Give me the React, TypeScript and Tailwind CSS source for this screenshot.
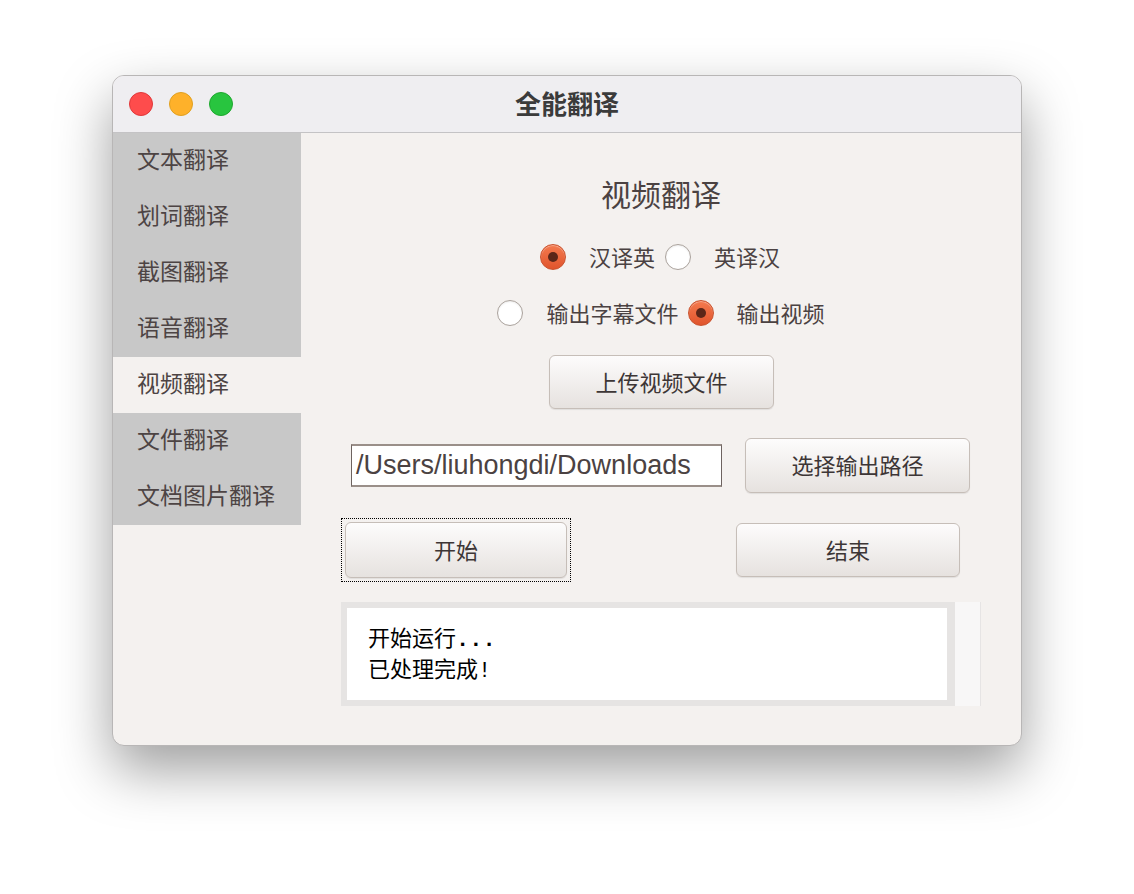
import React from 'react'

const CJK = { fontFamily: '"Noto Sans CJK SC", "Noto Sans", sans-serif' }
const MONO = { fontFamily: '"Liberation Mono", "Noto Sans CJK SC", monospace' }

const MENU = ['文本翻译', '划词翻译', '截图翻译', '语音翻译', '视频翻译', '文件翻译', '文档图片翻译']

function Radio({ checked }: { checked: boolean }) {
  if (checked) {
    return (
      <span className="flex h-[26px] w-[26px] shrink-0 items-center justify-center rounded-full border border-[#c9512c] bg-gradient-to-b from-[#f47a4e] to-[#e0542c] shadow-[inset_0_1px_1px_rgba(255,255,255,0.4)]">
        <span className="h-[10px] w-[10px] rounded-full bg-[#5b2618]" />
      </span>
    )
  }
  return (
    <span className="h-[26px] w-[26px] shrink-0 rounded-full border border-[#aaa29c] bg-white shadow-[inset_0_1px_2px_rgba(0,0,0,0.08)]" />
  )
}

function Option({ label, checked }: { label: string; checked: boolean }) {
  return (
    <div className="flex items-center">
      <Radio checked={checked} />
      <span className="ml-[23px] pb-[2px] text-[22px] leading-none text-[#4b4242]">{label}</span>
    </div>
  )
}

function Btn({ label, className = '' }: { label: string; className?: string }) {
  return (
    <button
      className={`flex items-center justify-center rounded-[6px] border border-[#c6beb8] bg-gradient-to-b from-[#fdfcfc] to-[#e6e2df] pb-[2px] text-[22px] text-[#3d3636] shadow-[0_1px_1px_rgba(0,0,0,0.08)] ${className}`}
    >
      {label}
    </button>
  )
}

export default function App() {
  return (
    <div className="min-h-[894px] w-[1134px] bg-white pl-[112px] pt-[75px]" style={CJK}>
      <div className="flex h-[671px] w-[910px] flex-col overflow-hidden rounded-[12px] border border-[#b8b6b6] bg-[#f4f1ef] shadow-[0_24px_55px_rgba(0,0,0,0.38)]">
        {/* title bar */}
        <div className="relative flex h-[57px] shrink-0 items-center justify-center border-b border-[#c4c3c5] bg-[#efeef1]">
          <div className="absolute left-[16px] top-[16px] flex gap-[16px]">
            <span className="h-[24px] w-[24px] rounded-full border border-[#e0383a] bg-[#fe4c4c]" />
            <span className="h-[24px] w-[24px] rounded-full border border-[#e0a020] bg-[#feb12a]" />
            <span className="h-[24px] w-[24px] rounded-full border border-[#1fa82f] bg-[#28c53f]" />
          </div>
          <span className="pb-[2px] text-[26px] font-bold leading-none text-[#3b3b3b]">全能翻译</span>
        </div>

        <div className="flex flex-1">
          {/* sidebar */}
          <div className="w-[188px] shrink-0">
            {MENU.map((m, i) => (
              <div
                key={m}
                className={`flex h-[56px] items-center pb-[5px] pl-[24px] text-[23px] text-[#4d4444] ${i === 4 ? 'bg-[#f4f1ef]' : 'bg-[#c8c8c8]'}`}
              >
                {m}
              </div>
            ))}
          </div>

          {/* content */}
          <div className="flex flex-1 flex-col">
            <div className="mt-[42px] text-center text-[30px] leading-[36px] text-[#4b4242]">视频翻译</div>

            <div className="mt-[33px] flex justify-center gap-[10px] pr-[2px]">
              <Option label="汉译英" checked={true} />
              <Option label="英译汉" checked={false} />
            </div>

            <div className="mt-[30px] flex justify-center gap-[9px]">
              <Option label="输出字幕文件" checked={false} />
              <Option label="输出视频" checked={true} />
            </div>

            <div className="mt-[29px] flex pl-[248px]">
              <Btn label="上传视频文件" className="h-[54px] w-[225px]" />
            </div>

            <div className="mt-[29px] flex items-center pl-[50px]">
              <div
                className="flex h-[43px] w-[371px] items-center border-x border-y-2 border-x-[#6d6360] border-y-[#9a8f89] bg-white pl-[4px] text-[27px] text-[#4b4242]"
                style={{ fontFamily: '"Liberation Sans", Arial, sans-serif' }}
              >
                /Users/liuhongdi/Downloads
              </div>
              <Btn label="选择输出路径" className="ml-[23px] h-[55px] w-[225px]" />
            </div>

            <div className="mt-[25px] flex items-center pl-[40px]">
              <div className="border border-dotted border-black p-[3px]">
                <Btn label="开始" className="h-[56px] w-[222px]" />
              </div>
              <Btn label="结束" className="ml-[165px] h-[54px] w-[224px]" />
            </div>

            <div className="ml-[40px] mt-[20px] flex h-[104px] w-[640px]">
              <div className="flex-1 bg-[#e6e4e3] pb-[6px] pl-[6px] pr-[8px] pt-[6px]">
                <div className="h-full bg-white pl-[21px] pt-[15px] text-[22px] leading-[26px] text-black">
                  <div>
                    开始运行<span className="font-bold" style={MONO}>...</span>
                  </div>
                  <div>
                    已处理完成<span style={MONO}>!</span>
                  </div>
                </div>
              </div>
              <div className="w-[26px] border-r border-[#e6e4e4] bg-[#f8f7f7]" />
            </div>
          </div>
        </div>
      </div>
    </div>
  )
}
